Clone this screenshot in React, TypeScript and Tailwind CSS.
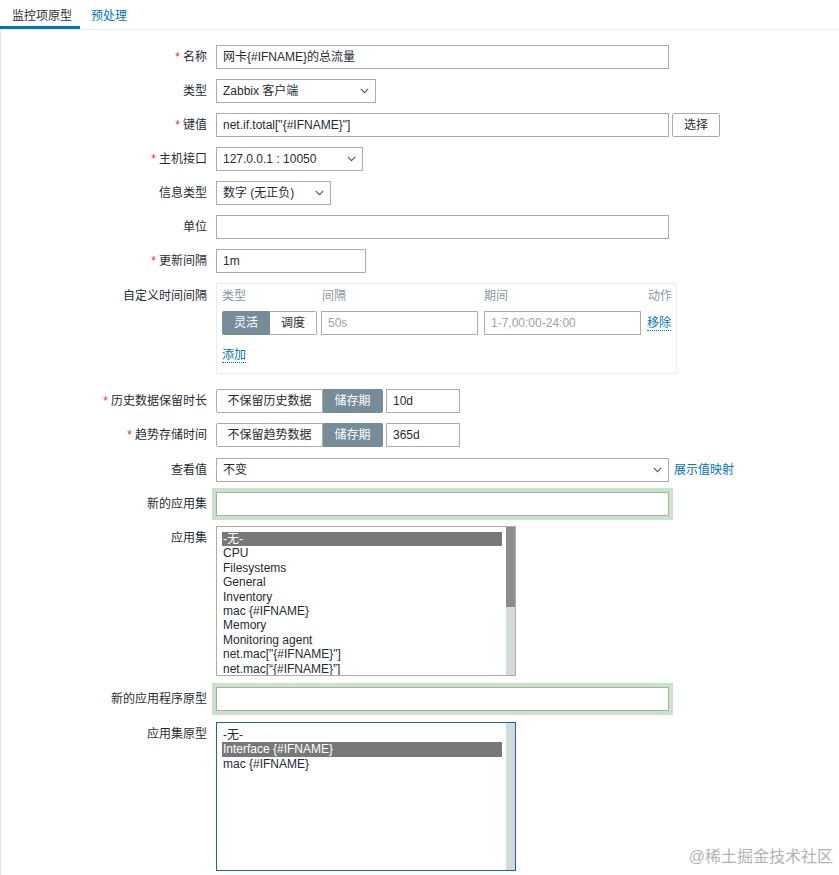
import React from 'react'

// Zabbix 监控项原型 form (item prototype edit) — static recreation.

const FONT = '"Liberation Sans", "Noto Sans CJK SC", sans-serif'

function Chevron() {
  return (
    <svg width="9" height="6" viewBox="0 0 9 6" className="shrink-0">
      <path d="M0.8 0.8 L4.5 4.6 L8.2 0.8" fill="none" stroke="#4f5b62" strokeWidth="1.1" />
    </svg>
  )
}

function Label({ text, required }: { text: string; required?: boolean }) {
  return (
    <div className="w-[207px] shrink-0 pr-0 text-right text-[12px] leading-[24px] text-[#1f2c33]">
      {required && <span className="mr-[3px] text-[#e33734]">*</span>}
      {text}
    </div>
  )
}

function Row({
  label,
  required,
  className = '',
  children,
}: {
  label: string
  required?: boolean
  className?: string
  children: React.ReactNode
}) {
  return (
    <div className={`flex items-start ${className}`}>
      <Label text={label} required={required} />
      <div className="ml-[9px] flex items-center">{children}</div>
    </div>
  )
}

function TextBox({ value, width, placeholder }: { value?: string; width: string; placeholder?: string }) {
  return (
    <div
      className={`flex h-[24px] items-center border border-[#acacac] bg-white px-[6px] text-[12px] ${width} ${
        placeholder ? 'text-[#9aa4aa]' : 'text-[#1f2c33]'
      }`}
    >
      {value ?? placeholder}
    </div>
  )
}

function Select({ value, width }: { value: string; width: string }) {
  return (
    <div
      className={`flex h-[24px] items-center justify-between border border-[#acacac] bg-white pl-[6px] pr-[6px] text-[12px] text-[#1f2c33] ${width}`}
    >
      <span>{value}</span>
      <Chevron />
    </div>
  )
}

function Segmented({ left, right, leftW, rightW, active }: { left: string; right: string; leftW: string; rightW: string; active: 'left' | 'right' }) {
  const on = 'bg-[#768d99] border-[#768d99] text-white'
  const off = 'bg-white border-[#acacac] text-[#1f2c33]'
  return (
    <div className="flex h-[24px] text-[12px]">
      <div className={`flex items-center justify-center rounded-l-[2px] border ${leftW} ${active === 'left' ? on : off}`}>{left}</div>
      <div className={`flex items-center justify-center rounded-r-[2px] border border-l-0 ${rightW} ${active === 'right' ? on : off}`}>{right}</div>
    </div>
  )
}

function GreenInput() {
  return <div className="h-[24px] w-[453px] border border-[#acacac] bg-white shadow-[0_0_0_4px_#c9e3ca]" />
}

function ListBox({
  items,
  selected,
  height,
  focused,
  thumb,
}: {
  items: string[]
  selected: number
  height: string
  focused?: boolean
  thumb?: boolean
}) {
  return (
    <div className={`flex w-[300px] overflow-hidden border bg-white ${height} ${focused ? 'border-[#1f65a0]' : 'border-[#acacac]'}`}>
      <div className="flex-1 overflow-hidden pl-[5px] pr-[4px] pt-[5px]">
        {items.map((it, i) => (
          <div
            key={i}
            className={`whitespace-nowrap pl-[1px] text-[12px] leading-[14.4px] ${
              i === selected ? 'bg-[#787878] text-white' : 'text-[#1f2c33]'
            }`}
          >
            {it}
          </div>
        ))}
      </div>
      <div className="flex w-[9px] shrink-0 flex-col bg-[#d3dadb]">
        {thumb && <div className="h-[80px] bg-[#8c8c8c]" />}
      </div>
    </div>
  )
}

function DottedLink({ children }: { children: React.ReactNode }) {
  return (
    <span className="border-b border-dotted border-[#0275b8] leading-[14px] text-[#0275b8]">{children}</span>
  )
}

const APPS = [
  '-无-',
  'CPU',
  'Filesystems',
  'General',
  'Inventory',
  'mac {#IFNAME}',
  'Memory',
  'Monitoring agent',
  'net.mac["{#IFNAME}"]',
  'net.mac[“{#IFNAME}”]',
]

const APP_PROTOS = ['-无-', 'Interface {#IFNAME}', 'mac {#IFNAME}']

export default function App() {
  return (
    <div className="relative h-[875px] w-[839px] overflow-hidden bg-white" style={{ fontFamily: FONT }}>
      {/* tabs */}
      <div className="flex h-[30px] border-b border-[#ebeef0] text-[12px]">
        <div className="w-[80px] border-b-[3px] border-[#0275b8] pl-[12px] pt-[7px] text-[#1f2c33]">监控项原型</div>
        <div className="pl-[11px] pt-[7px] text-[#0275b8]">预处理</div>
      </div>

      <div className="h-[845px] border-l border-[#e3e6e8] pt-[15px]">
        <div className="-ml-px flex flex-col">
          <Row label="名称" required>
            <TextBox value="网卡{#IFNAME}的总流量" width="w-[453px]" />
          </Row>
          <Row label="类型" className="mt-[10px]">
            <Select value="Zabbix 客户端" width="w-[160px]" />
          </Row>
          <Row label="键值" required className="mt-[10px]">
            <TextBox value={'net.if.total["{#IFNAME}"]'} width="w-[453px]" />
            <div className="ml-[3px] flex h-[24px] w-[48px] items-center justify-center rounded-[2px] border border-[#acacac] bg-white text-[12px] text-[#1f2c33]">
              选择
            </div>
          </Row>
          <Row label="主机接口" required className="mt-[10px]">
            <Select value="127.0.0.1 : 10050" width="w-[147px]" />
          </Row>
          <Row label="信息类型" className="mt-[10px]">
            <Select value="数字 (无正负)" width="w-[115px]" />
          </Row>
          <Row label="单位" className="mt-[10px]">
            <TextBox value="" width="w-[453px]" />
          </Row>
          <Row label="更新间隔" required className="mt-[10px]">
            <TextBox value="1m" width="w-[150px]" />
          </Row>

          {/* 自定义时间间隔 */}
          <div className="mt-[10px] flex items-start">
            <div className="w-[207px] shrink-0 pt-[6px] text-right text-[12px] leading-[14px] text-[#1f2c33]">自定义时间间隔</div>
            <div className="ml-[9px] h-[91px] w-[461px] border border-[#ebeef0] pl-[5px] pt-[5px]">
              <div className="grid grid-cols-[99px_163px_163px_auto] text-[12px] leading-[14px] text-[#8896a0]">
                <div>类型</div>
                <div className="pl-[1px]">间隔</div>
                <div>期间</div>
                <div className="pl-[1px]">动作</div>
              </div>
              <div className="mt-[8px] grid grid-cols-[99px_163px_163px_auto] items-center">
                <Segmented left="灵活" right="调度" leftW="w-[48px]" rightW="w-[47px]" active="left" />
                <TextBox placeholder="50s" width="w-[157px]" />
                <TextBox placeholder="1-7,00:00-24:00" width="w-[157px]" />
                <div className="text-[12px]">
                  <DottedLink>移除</DottedLink>
                </div>
              </div>
              <div className="mt-[11px] text-[12px]">
                <DottedLink>添加</DottedLink>
              </div>
            </div>
          </div>

          <Row label="历史数据保留时长" required className="mt-[15px]">
            <Segmented left="不保留历史数据" right="储存期" leftW="w-[107px]" rightW="w-[60px]" active="right" />
            <div className="ml-[3px]">
              <TextBox value="10d" width="w-[74px]" />
            </div>
          </Row>
          <Row label="趋势存储时间" required className="mt-[10px]">
            <Segmented left="不保留趋势数据" right="储存期" leftW="w-[107px]" rightW="w-[60px]" active="right" />
            <div className="ml-[3px]">
              <TextBox value="365d" width="w-[74px]" />
            </div>
          </Row>
          <Row label="查看值" className="mt-[11px]">
            <Select value="不变" width="w-[453px]" />
            <span className="ml-[5px] text-[12px] text-[#0275b8]">展示值映射</span>
          </Row>
          <Row label="新的应用集" className="mt-[10px]">
            <GreenInput />
          </Row>
          <Row label="应用集" className="mt-[10px]">
            <ListBox items={APPS} selected={0} height="h-[150px]" thumb />
          </Row>
          <Row label="新的应用程序原型" className="mt-[11px]">
            <GreenInput />
          </Row>
          <Row label="应用集原型" className="mt-[11px]">
            <ListBox items={APP_PROTOS} selected={1} height="h-[149px]" focused />
          </Row>
        </div>
      </div>

      {/* watermark */}
      <div className="absolute bottom-[6px] right-[6px] text-[16px] text-[#b3b3b3]">@稀土掘金技术社区</div>
    </div>
  )
}
